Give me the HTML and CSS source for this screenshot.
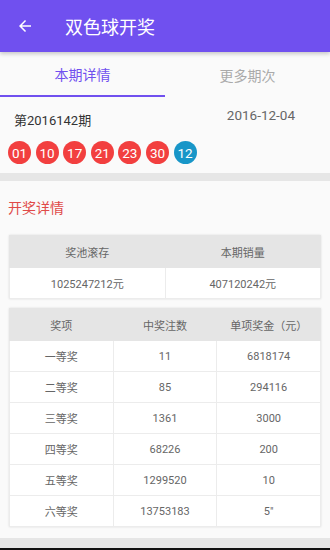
FILE: index.html
```html
<!DOCTYPE html>
<html lang="zh">
<head>
    <meta charset="UTF-8">
    <meta name="viewport" content="width=device-width, initial-scale=1.0">
    <title>双色球开奖</title>
    <link rel="stylesheet" href="styles.css">
</head>
<body>
    <div class="toolbar">
        <svg class="back" width="18" height="18" viewBox="0 0 24 24">
            <path d="M20 11H7.83l5.59-5.59L12 4l-8 8 8 8 1.41-1.41L7.83 13H20v-2z" fill="#fff"/>
        </svg>
        <span class="title">双色球开奖</span>
    </div>

    <div class="tabs">
        <div class="tab active">本期详情</div>
        <div class="tab">更多期次</div>
    </div>

    <div class="issue">
        <div class="issue-top">
            <span class="issue-no">第2016142期</span>
            <span class="issue-date">2016-12-04</span>
        </div>
        <div class="balls">
            <span class="ball red">01</span>
            <span class="ball red">10</span>
            <span class="ball red">17</span>
            <span class="ball red">21</span>
            <span class="ball red">23</span>
            <span class="ball red">30</span>
            <span class="ball blue">12</span>
        </div>
    </div>

    <div class="divider"></div>

    <div class="detail">
        <h2 class="section-title">开奖详情</h2>

        <table class="grid two">
            <tr class="head"><td>奖池滚存</td><td>本期销量</td></tr>
            <tr><td>1025247212元</td><td>407120242元</td></tr>
        </table>

        <table class="grid three">
            <tr class="head"><td>奖项</td><td>中奖注数</td><td>单项奖金（元）</td></tr>
            <tr><td>一等奖</td><td>11</td><td>6818174</td></tr>
            <tr><td>二等奖</td><td>85</td><td>294116</td></tr>
            <tr><td>三等奖</td><td>1361</td><td>3000</td></tr>
            <tr><td>四等奖</td><td>68226</td><td>200</td></tr>
            <tr><td>五等奖</td><td>1299520</td><td>10</td></tr>
            <tr><td>六等奖</td><td>13753183</td><td>5"</td></tr>
        </table>
    </div>

    <div class="bottom-gray"></div>
    <div class="bottom-bar"></div>
</body>
</html>
```

FILE: styles.css
```css
body {
    margin: 0;
    background: #fafafa;
    font-family: Roboto, "Noto Sans CJK SC", sans-serif;
    width: 330px;
    height: 550px;
    overflow: hidden;
}
.toolbar {
    height: 52px;
    background: #7050ef;
    display: flex;
    align-items: center;
    padding-left: 16px;
    box-shadow: 0 2px 4px rgba(0,0,0,0.2);
    position: relative;
}
.back {
    margin-right: 31px;
}
.title {
    color: #fff;
    font-size: 18px;
}
.tabs {
    display: flex;
    height: 45px;
}
.tab {
    flex: 1;
    display: flex;
    align-items: center;
    justify-content: center;
    font-size: 14px;
    color: #aaa;
    box-sizing: border-box;
    padding-top: 1px;
}
.tab.active {
    color: #7050ef;
    border-bottom: 2px solid #7050ef;
}
.issue {
    box-sizing: border-box;
    padding: 10px 8px 0 8px;
    height: 76px;
}
.issue-top {
    display: flex;
    justify-content: space-between;
    align-items: flex-start;
}
.issue-no {
    font-size: 13px;
    color: #333;
    margin-left: 6px;
    margin-top: 3px;
}
.issue-date {
    font-size: 13.5px;
    color: #666;
    margin-right: 27px;
}
.balls {
    display: flex;
    gap: 4.6px;
    margin-top: 12px;
}
.ball {
    width: 23px;
    height: 23px;
    border-radius: 50%;
    color: #fff;
    font-size: 13.5px;
    display: flex;
    align-items: center;
    justify-content: center;
}
.ball.red { background: #f23f3f; }
.ball.blue { background: #1896c8; }
.divider {
    height: 8px;
    background: #e6e6e6;
}
.detail {
    padding: 0 9px 0 9px;
    height: 357px;
}
.section-title {
    margin: 0;
    padding: 16px 0 0 0;
    height: 38px;
    font-size: 14px;
    font-weight: normal;
    color: #e04a48;
    margin-left: -1px;
}
.grid {
    width: 100%;
    border-collapse: collapse;
    table-layout: fixed;
    box-shadow: 0 0 2px rgba(0,0,0,0.12);
    background: #fff;
    font-size: 11px;
    color: #666;
    text-align: center;
}
.grid td {
    border: 1px solid #ececec;
    padding: 0;
    height: 30px;
}
.grid .head td {
    background: #e5e5e5;
    border-color: #e5e5e5;
    height: 31px;
}
.grid.two {
    margin-bottom: 9px;
}
.bottom-gray {
    height: 10px;
    background: #e6e6e6;
}
.bottom-bar {
    height: 4px;
    background: #111;
}
```
